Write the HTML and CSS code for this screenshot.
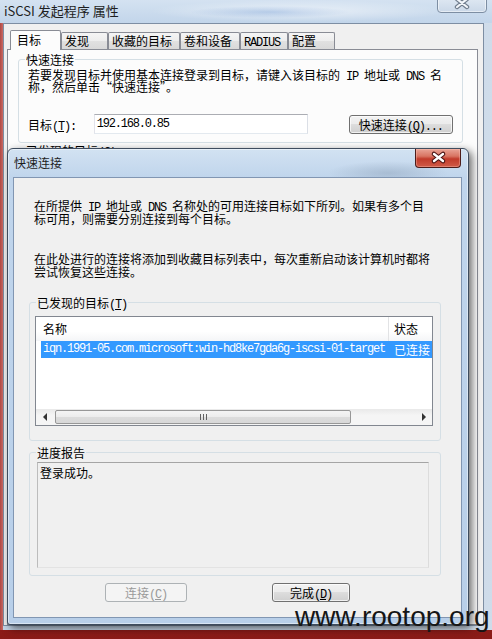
FILE: index.html
```html
<!DOCTYPE html>
<html lang="zh-CN">
<head>
    <meta charset="UTF-8">
    <title>快速连接</title>
    <link rel="stylesheet" href="styles.css">
</head>
<body>
    <div class="main">
        <div class="main-title">
            <span class="main-caption">iSCSI 发起程序 属性</span>
            <span class="close-btn inactive">
                <svg width="48" height="17" viewBox="0 0 48 17">
                    <path d="M19 4 L29 12 M29 4 L19 12" stroke="#6f7c8c" stroke-width="4.4" stroke-linecap="round"/>
                    <path d="M19 4 L29 12 M29 4 L19 12" stroke="#f3f6fa" stroke-width="2.2" stroke-linecap="round"/>
                </svg>
            </span>
        </div>
        <div class="main-body">
            <div class="main-client">
                <div class="tabs">
                    <span class="tab active">目标</span>
                    <span class="tab">发现</span>
                    <span class="tab">收藏的目标</span>
                    <span class="tab">卷和设备</span>
                    <span class="tab"><span class="ascii">RADIUS</span></span>
                    <span class="tab">配置</span>
                </div>
                <div class="tab-page">
                    <fieldset class="group quick">
                        <legend>快速连接</legend>
                        <p class="desc">若要发现目标并使用基本连接登录到目标，请键入该目标的<span class="ascii"> IP </span>地址或<span class="ascii"> DNS </span>名<br>称，然后单击“快速连接”。</p>
                        <div class="target-row">
                            <span class="target-label">目标<span class="ascii">(<u>T</u>):</span></span>
                            <div class="textbox mono">192.168.0.85</div>
                            <button class="btn btn-quick">快速连接<span class="ascii">(<u>Q</u>)...</span></button>
                        </div>
                    </fieldset>
                    <fieldset class="group found">
                        <legend>已发现的目标<span class="ascii">(<u>G</u>)</span></legend>
                    </fieldset>
                </div>
            </div>
        </div>
    </div>

    <div class="dlg">
        <div class="dlg-title">
            <span class="dlg-caption">快速连接</span>
            <span class="close-btn active">
                <svg width="44" height="18" viewBox="0 0 44 18">
                    <path d="M18 5 L27 12 M27 5 L18 12" stroke="#4a1414" stroke-width="4.6" stroke-linecap="round"/>
                    <path d="M18 5 L27 12 M27 5 L18 12" stroke="#ffffff" stroke-width="2.4" stroke-linecap="round"/>
                </svg>
            </span>
        </div>
        <div class="dlg-client">
            <p class="info">在所提供<span class="ascii"> IP </span>地址或<span class="ascii"> DNS </span>名称处的可用连接目标如下所列。如果有多个目<br>标可用，则需要分别连接到每个目标。</p>
            <p class="info second">在此处进行的连接将添加到收藏目标列表中，每次重新启动该计算机时都将<br>尝试恢复这些连接。</p>

            <fieldset class="group targets">
                <legend>已发现的目标<span class="ascii">(<u>T</u>)</span></legend>
                <div class="listview">
                    <div class="lv-header">
                        <span class="col-name">名称</span>
                        <span class="col-status">状态</span>
                    </div>
                    <div class="lv-row">
                        <span class="col-name mono">iqn.1991-05.com.microsoft:win-hd8ke7gda6g-iscsi-01-target</span>
                        <span class="col-status">已连接</span>
                    </div>
                    <div class="lv-fill"></div>
                    <div class="hscroll">
                        <span class="arrow left"></span>
                        <div class="track">
                            <div class="thumb"><span class="grip"></span></div>
                        </div>
                        <span class="arrow right"></span>
                    </div>
                </div>
            </fieldset>

            <fieldset class="group progress">
                <legend>进度报告</legend>
                <div class="report">登录成功。</div>
            </fieldset>

            <div class="actions">
                <button class="btn btn-connect" disabled>连接<span class="ascii">(<u>C</u>)</span></button>
                <button class="btn btn-finish">完成<span class="ascii">(<u>D</u>)</span></button>
            </div>
        </div>
    </div>

    <div class="watermark">www.rootop.org</div>
</body>
</html>
```

FILE: styles.css
```css
* {
    box-sizing: border-box;
}

body {
    margin: 0;
    width: 492px;
    height: 639px;
    overflow: hidden;
    position: relative;
    background: linear-gradient(180deg, #a8322c 0%, #8a1b17 100%);
    font-family: "Noto Sans CJK SC", sans-serif;
    font-size: 12px;
    color: #000;
}

/* SimSun-like half-width latin */
.mono,
.ascii {
    font-family: "Liberation Mono", monospace;
    letter-spacing: -1.2px;
}

/* inline runs must not grow the CJK line box */
.ascii {
    line-height: 0;
}

/* background window: iSCSI 发起程序 属性 */
.main {
    position: absolute;
    left: 0;
    top: 0;
    width: 500px;
    height: 630px;
    display: flex;
    flex-direction: column;
    background: linear-gradient(90deg, #b04843 0, #c86a64 3px, #c3d4e7 3px, #cfdcea 100%);
}

.main-title {
    height: 23px;
    display: flex;
    align-items: flex-start;
    background:
        radial-gradient(ellipse 80px 6px at 270px 12px, rgba(80, 130, 200, 0.3), rgba(80, 130, 200, 0)),
        radial-gradient(ellipse 150px 11px at 300px 11px, rgba(255, 255, 255, 0.55), rgba(255, 255, 255, 0)),
        linear-gradient(180deg, #d4e2f1 0%, #c2d5ea 100%);
}

.main-caption {
    padding-left: 4px;
    line-height: 21px;
    font-size: 13px;
    color: #1e1e1e;
}

.close-btn {
    margin-left: auto;
    height: 19px;
    border: 1px solid;
    border-radius: 0 0 4px 4px;
}

.close-btn svg {
    display: block;
}

.close-btn.inactive {
    width: 50px;
    margin-top: -6px;
    margin-right: 13px;
    border-color: #7d8ea3;
    background: linear-gradient(180deg, #e4ecf5 0%, #cad8e8 100%);
    box-shadow: inset 0 0 0 1px rgba(255, 255, 255, 0.5);
}

.close-btn.active {
    width: 46px;
    margin-right: 1px;
    border-color: #4c1c1a;
    border-top: none;
    background: linear-gradient(180deg, #e9a496 0%, #d87462 40%, #c13b2b 55%, #d05b48 100%);
    box-shadow: inset 0 0 0 1px rgba(255, 200, 190, 0.35);
}

.main-body {
    flex: 1;
    display: flex;
    padding: 0 0 4px 3px;
}

.main-client {
    width: 481px;
    border: 1px solid #7d8ea3;
    background: #f0f0f0;
    display: flex;
    flex-direction: column;
}

.tabs {
    display: flex;
    align-items: flex-end;
    height: 20px;
    margin-top: 6px;
    padding-left: 6px;
}

.tab {
    height: 17px;
    margin-bottom: 1px;
    min-width: 47px;
    padding: 0 7px 0 3px;
    border: 1px solid #898c95;
    border-bottom: none;
    border-radius: 2px 2px 0 0;
    background: linear-gradient(180deg, #f5f5f5 0%, #ededed 50%, #e1e1e1 51%, #d9d9d9 100%);
    line-height: 16px;
    white-space: nowrap;
}

.tab.active {
    position: relative;
    z-index: 1;
    height: 20px;
    margin-bottom: 0;
    min-width: 51px;
    padding: 0 6px;
    background: #fcfcfc;
    line-height: 18px;
}

.tab-page {
    flex: 1;
    margin: -1px 5px 0 3px;
    padding: 3px 14px 0 10px;
    border: 1px solid #898c95;
    background: #fcfcfc;
}

/* group boxes */
.group {
    margin: 0;
    min-width: 0;
    padding: 3px 9px 8px;
    border: 1px solid #d5dfe5;
    border-radius: 3px;
}

.group legend {
    margin-left: -3px;
    padding: 0 1px;
    line-height: 13px;
}

.desc {
    margin: 0;
    line-height: 12px;
    white-space: nowrap;
}

.target-row {
    display: flex;
    align-items: center;
    margin-top: 21px;
}

.target-label {
    width: 66px;
}

.textbox {
    width: 215px;
    height: 20px;
    padding-left: 2px;
    border: 1px solid;
    border-color: #abadb3 #dbdfe6 #e3e9ef #e2e3ea;
    background: #fff;
    line-height: 18px;
}

.found {
    margin-top: 1px;
    height: 120px;
}

/* buttons */
.btn {
    height: 19px;
    padding: 0;
    font-family: inherit;
    font-size: 12px;
    color: #000;
    border: 1px solid #707070;
    border-radius: 3px;
    background: linear-gradient(180deg, #f2f2f2 0%, #ebebeb 49%, #dddddd 50%, #cfcfcf 100%);
    box-shadow: inset 0 0 0 1px rgba(255, 255, 255, 0.7);
    line-height: 17px;
}

.btn:disabled {
    color: #9a9a9a;
    border-color: #adb2b5;
    background: #f4f4f4;
    box-shadow: none;
}

.btn-quick {
    width: 105px;
    margin-left: 41px;
}

.btn-connect {
    width: 82px;
}

.btn-finish {
    width: 78px;
}

/* quick connect dialog */
.dlg {
    position: absolute;
    left: 7px;
    top: 148px;
    width: 462px;
    height: 477px;
    display: flex;
    flex-direction: column;
    padding: 0 6px 6px 5px;
    border: 1px solid #3e4c5e;
    border-radius: 6px 6px 3px 3px;
    background:
        radial-gradient(ellipse 60px 12px at 380px 24px, rgba(120, 140, 165, 0.35), rgba(120, 140, 165, 0)),
        linear-gradient(180deg, #d2e2f2 0%, #c0d5ec 6%, #b8cfe9 100%);
    box-shadow: inset 0 0 0 1px rgba(255, 255, 255, 0.45), 3px 3px 9px rgba(0, 0, 0, 0.6);
}

.dlg-title {
    height: 28px;
    display: flex;
    align-items: flex-start;
}

.dlg-caption {
    padding-left: 1px;
    line-height: 28px;
    color: #1e1e1e;
}

.dlg-client {
    flex: 1;
    padding: 0 20px 0 15px;
    border: 1px solid #8196b2;
    background: #f0f0f0;
}

.info {
    margin: 21px 0 0 5px;
    line-height: 13px;
    white-space: nowrap;
}

.info.second {
    margin-top: 27px;
}

.targets {
    width: 412px;
    margin-top: 18px;
    padding: 7px 0 14px 9px;
}

.listview {
    width: 398px;
    height: 110px;
    margin-left: -4px;
    border: 1px solid #828790;
    background: #fff;
    display: flex;
    flex-direction: column;
    overflow: hidden;
}

.lv-header {
    flex: none;
    display: flex;
    height: 24px;
    line-height: 24px;
    background: linear-gradient(180deg, #ffffff 0%, #ffffff 60%, #f4f5f7 100%);
}

.lv-header .col-name {
    width: 353px;
    padding-left: 7px;
    border-right: 1px solid #e2e3e5;
}

.lv-header .col-status {
    padding-left: 5px;
}

.lv-row {
    flex: none;
    display: flex;
    height: 17px;
    margin-left: 5px;
    line-height: 17px;
    background: #3399ff;
    color: #fff;
    white-space: nowrap;
}

.lv-row .col-name {
    width: 347px;
    padding-left: 2px;
}

.lv-row .col-status {
    padding-left: 6px;
}

.lv-fill {
    flex: 1;
}

.hscroll {
    flex: none;
    display: flex;
    height: 16px;
    background: linear-gradient(180deg, #e9e9e9 0%, #f5f5f5 40%, #f5f5f5 100%);
}

.arrow {
    width: 17px;
    display: flex;
    align-items: center;
    justify-content: center;
}

.arrow::before {
    content: "";
    border-top: 4px solid transparent;
    border-bottom: 4px solid transparent;
}

.arrow.left::before {
    border-right: 4px solid #333;
}

.arrow.right::before {
    border-left: 4px solid #333;
}

.track {
    flex: 1;
    padding: 1px 0 1px 2px;
}

.thumb {
    width: 296px;
    height: 14px;
    display: flex;
    align-items: center;
    justify-content: center;
    border: 1px solid #979797;
    border-radius: 2px;
    background: linear-gradient(180deg, #f4f4f4 0%, #ececec 50%, #dcdcdc 51%, #d8d8d8 100%);
}

.grip {
    width: 7px;
    height: 6px;
    background: linear-gradient(90deg, #606060 1px, transparent 1px);
    background-size: 3px 100%;
}

.progress {
    width: 412px;
    margin-top: 5px;
    padding: 3px 0 7px 9px;
}

.report {
    width: 392px;
    height: 106px;
    margin-left: -2px;
    padding: 3px 0 0 2px;
    border: 1px solid;
    border-color: #a5a5a5 #dcdcdc #e3e3e3 #bcbcbc;
    line-height: 13px;
}

.actions {
    display: flex;
    gap: 85px;
    margin-top: 7px;
    padding-left: 76px;
}

.watermark {
    position: absolute;
    left: 295px;
    top: 603px;
    font-family: "Liberation Sans", Arial, sans-serif;
    font-size: 28px;
    line-height: 28px;
    color: #161616;
}
```
